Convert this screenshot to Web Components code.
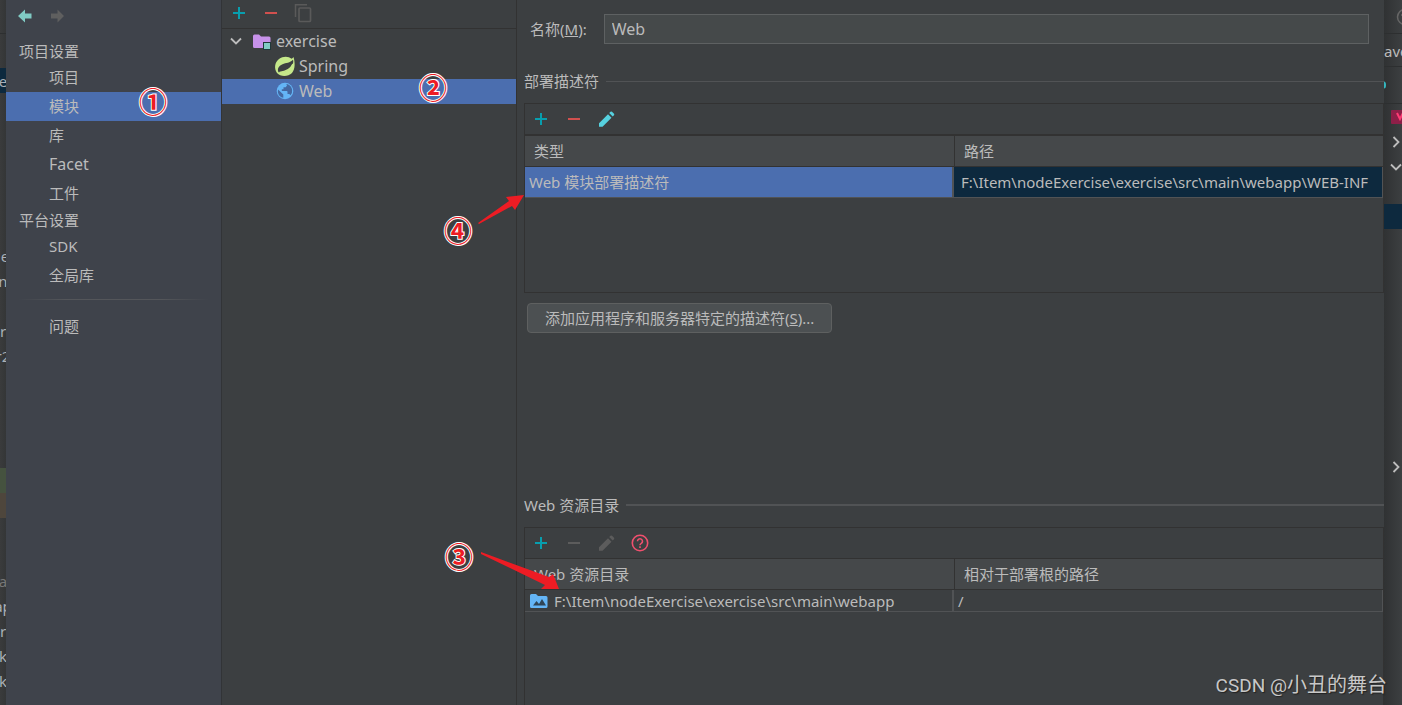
<!DOCTYPE html>
<html lang="zh-CN">
<head>
<meta charset="utf-8">
<title>项目结构</title>
<style>
  html, body { margin: 0; height: 100%; }
  body {
    background: #3c3f41; color: #bbbbbb; overflow: hidden;
    font: 15px/20px "Noto Sans", "Noto Sans CJK SC", sans-serif;
  }
</style>
</head>
<body>
<project-structure></project-structure>

<script>
const define = (name, html, setup) => {
  const template = document.createElement('template');
  template.innerHTML = html;
  customElements.define(name, class extends HTMLElement {
    constructor() {
      super();
      this.attachShadow({ mode: 'open' }).append(template.content.cloneNode(true));
    }
    connectedCallback() { if (setup) setup(this, this.shadowRoot); }
  });
};

const icons = {
  back: '<path d="M1 9 8 2.500V6.500H14.500V11.500H8V15.500Z" fill="#80cbc4"/>',
  forward: '<path d="M16 9 9.500 2.500V6.500H3V11.500H9.500V15.500Z" fill="#5f5f5f"/>',
  plus: '<path d="M9 3v12M3 9h12" stroke="#089eae" stroke-width="2"/>',
  minus: '<path d="M3 9h12" stroke="#d1504e" stroke-width="2"/>',
  minusOff: '<path d="M3 9h12" stroke="#5c5c5c" stroke-width="2"/>',
  copy: '<path d="M1.500 13V.700H13" fill="none" stroke="#5a5a5a" stroke-width="1.500"/><rect x="5" y="4" width="11.500" height="13.500" rx="1" fill="none" stroke="#5a5a5a" stroke-width="1.700"/>',
  pencil: '<path d="M1 13.200 10 4.200l3.500 3.500-9 9H1zM11.200 3l1.300-1.300q.8-.6 1.500 0l2 2q.6.7 0 1.500L14.700 6.500z" fill="#56d1df"/>',
  pencilOff: '<path d="M1 13.200 10 4.200l3.500 3.500-9 9H1zM11.200 3l1.300-1.300q.8-.6 1.500 0l2 2q.6.7 0 1.500L14.700 6.500z" fill="#5c5c5c"/>',
  help: '<circle cx="9" cy="9" r="7.700" fill="none" stroke="#f0506e" stroke-width="1.600"/><path d="M6.500 7.300a2.500 2.500 0 1 1 3.800 2.100Q9 10.200 9 11.200M9 12.300v1.700" fill="none" stroke="#f0506e" stroke-width="1.600"/>',
  down: '<path d="m4 6.500 5 5 5-5" fill="none" stroke="#bdbdbd" stroke-width="1.800"/>',
  right: '<path d="m6.500 4 5 5-5 5" fill="none" stroke="#bdbdbd" stroke-width="1.800"/>',
  module: '<path d="M0 4Q0 2.500 1.500 2.500H6L8 4.500H16Q17.500 4.500 17.500 6V14.500Q17.500 16 16 16H1.500Q0 16 0 14.500Z" fill="#c792ea"/><rect x="10.500" y="10.500" width="7" height="7" fill="#80cbc4" stroke="#20383a"/>',
  spring: '<path d="M17.500 0C19 5 19.500 12 16 16 12 20 4.500 20 1 16-2 11.500-1.500 5.500 3 2 7-1.200 12.500-1 15.600 1.700 16.500 1.300 17 .8 17.500 0Z" fill="#c5e88a"/><path d="M17 2.800C14 6 10 5.800 6.500 7.300 2.500 9 1 12 2.500 15.200 8.500 15.600 13.500 13 16.500 7.500 17.500 5.700 17.400 4 17 2.800Z" fill="#3c3f41"/><path d="M3.500 15.600C9 14.800 14.500 13 17 7" fill="none" stroke="#c5e88a" stroke-width="1.500"/>',
  web: '<circle cx="9" cy="9" r="8.300" fill="#64b5f6"/><path d="M2 7.500 7.300 12.500V15.800Q3 15 1.900 10.500ZM10.300 2 11 3.500 9.700 5.300H7.500V7.300H5.800V9H10.800Q11.500 9 11.500 10V12H13.300L14.500 13.300Q16.500 11 16.100 7.800 15.500 3.700 11.800 2.200Z" fill="#4468a2"/>',
  webFolder: '<path d="M0 3.500Q0 2 1.500 2H6L8 4H16Q17.500 4 17.500 5.500V14.500Q17.500 16 16 16H1.500Q0 16 0 14.500Z" fill="#64b5f6"/><path d="m3 13.500 3.500-4.500 2.500 3 3-5 4 6.500Z" fill="#2f4557"/>',
  vue: '<rect x="0" y="2" width="18" height="14" rx="1" fill="#8e1f48"/><path d="m6 5 3 6 3-6" fill="none" stroke="#ff3b74" stroke-width="2"/>',
  face: '<circle cx="9" cy="9" r="7.500" fill="none" stroke="#666" stroke-width="1.500"/><path d="M5 7h2" stroke="#666" stroke-width="1.500"/>',
  dot: '<path d="M0 5.500q2 0 2 3.500t-2 3.500z" fill="#35b6bf"/>'
};

define('ui-icon', `<style>
  :host { display: block; flex: none; width: 18px; height: 18px; }
  svg { display: block; overflow: visible; }
</style><svg width="18" height="18" viewBox="0 0 18 18" aria-hidden="true"></svg>`,
(host, root) => { root.querySelector('svg').innerHTML = icons[host.getAttribute('name')] || ''; });

define('icon-button', `<style>
  :host { display: block; flex: none; }
  button { display: block; border: 0; padding: 0; background: none; }
</style><button type="button"></button>`,
(host, root) => {
  const button = root.querySelector('button');
  button.setAttribute('aria-label', host.getAttribute('label'));
  button.innerHTML = `<ui-icon name="${host.getAttribute('icon')}"></ui-icon>`;
});

define('nav-item', `<style>
  :host { display: block; }
  a { display: flex; align-items: center; box-sizing: border-box; height: 29px; padding: 0 0 2px 43px; color: inherit; text-decoration: none; }
  :host([selected]) a { background: #4b6eaf; }
</style><a href="#"><slot></slot></a>`);

define('settings-nav', `<style>
  :host { display: block; background: #3f434b; border-right: 1px solid #323437; }
  .history { display: flex; gap: 13px; padding: 7px 11px 14px; }
  h2 { margin: 0; padding-left: 13px; font: inherit; line-height: 24px; }
  .latin { font-size: 16px; }
  hr { height: 1px; margin: 9px 12px 12px; border: 0; background: linear-gradient(90deg, transparent, #54565a 25%, #54565a 75%, transparent); }
</style>
<div class="history"><icon-button icon="back" label="后退"></icon-button><icon-button icon="forward" label="前进"></icon-button></div>
<nav>
  <h2>项目设置</h2>
  <nav-item>项目</nav-item><nav-item selected>模块</nav-item><nav-item>库</nav-item><nav-item class="latin">Facet</nav-item><nav-item>工件</nav-item>
  <h2>平台设置</h2>
  <nav-item>SDK</nav-item><nav-item>全局库</nav-item>
  <hr>
  <nav-item>问题</nav-item>
</nav>`);

define('tree-row', `<style>
  :host { display: flex; align-items: center; gap: 5px; box-sizing: border-box; height: 25px; padding: 0 0 1px var(--indent, 5px); font-size: 16px; }
  :host([selected]) { background: #4b6eaf; }
</style><slot></slot>`);

define('module-tree', `<style>
  :host { display: block; border-right: 1px solid #323232; }
  .tools { display: flex; align-items: center; gap: 14px; box-sizing: border-box; height: 29px; padding: 0 8px 2px; border-bottom: 1px solid #323232; }
  .folder { margin-left: 3px; }
  .child { --indent: 54px; }
</style>
<div class="tools"><icon-button icon="plus" label="添加"></icon-button><icon-button icon="minus" label="移除"></icon-button><icon-button icon="copy" label="复制"></icon-button></div>
<tree-row><ui-icon name="down"></ui-icon><ui-icon class="folder" name="module"></ui-icon><span>exercise</span></tree-row>
<tree-row class="child"><ui-icon name="spring"></ui-icon><span>Spring</span></tree-row>
<tree-row class="child" selected><ui-icon name="web"></ui-icon><span>Web</span></tree-row>`);

define('section-title', `<style>
  :host { display: flex; align-items: center; gap: 7px; height: 24px; margin-bottom: 10px; }
  h2 { margin: 0; font: inherit; }
  i { flex: 1; height: var(--rule, 1px); background: #515355; }
</style><h2><slot></slot></h2><i></i>`);

define('table-panel', `<style>
  :host { display: block; box-sizing: border-box; border: 1px solid #323232; overflow: hidden; }
  .tools { display: flex; align-items: center; gap: 15px; height: 30px; padding-left: 7px; border-bottom: var(--line, 1px) solid #323232; }
</style><div class="tools"><slot name="tools"></slot></div><slot></slot>`);

const tableStyle = `
  :host { display: block; }
  table { width: 100%; table-layout: fixed; border-collapse: separate; border-spacing: 0; }
  th, td { box-sizing: border-box; padding: 0; text-align: left; font-weight: inherit; white-space: nowrap; overflow: hidden; }
  th { height: 31px; padding-left: 9px; background: #45484a; border-bottom: 1px solid #323232; }
  th:first-child { width: calc(50% + 1px); }
  th + th { border-left: 1px solid #323232; }
  td { border-bottom: 1px solid #515355; }
  td:first-child { padding-left: 4px; border-right: 2px solid #515355; }
  td:last-child { border-right: 1px solid #515355; }`;

define('descriptor-table', `<style>${tableStyle}
  td { height: 31px; }
  td:first-child { background: #4b6eaf; }
  td:last-child { padding-left: 7px; background: #0d293e; }
</style>
<table>
  <thead><tr><th>类型</th><th>路径</th></tr></thead>
  <tbody><tr><td>Web 模块部署描述符</td><td>F:\\Item\\nodeExercise\\exercise\\src\\main\\webapp\\WEB-INF</td></tr></tbody>
</table>`);

define('resource-table', `<style>${tableStyle}
  td { height: 22px; }
  td:last-child { padding-left: 4px; }
  div { display: flex; align-items: center; gap: 6px; padding-left: 1px; }
</style>
<table>
  <thead><tr><th>Web 资源目录</th><th>相对于部署根的路径</th></tr></thead>
  <tbody><tr><td><div><ui-icon name="webFolder"></ui-icon>F:\\Item\\nodeExercise\\exercise\\src\\main\\webapp</div></td><td>/</td></tr></tbody>
</table>`);

define('facet-editor', `<style>
  :host { display: flex; flex-direction: column; min-width: 0; padding-left: 7px; }
  .name { display: flex; align-items: center; gap: 17px; padding: 14px 15px 25px 6px; }
  input { flex: 1; min-width: 0; box-sizing: border-box; height: 30px; padding: 0 7px; border: 1px solid #5e6162; outline: 0; background: #45494a; color: inherit; font: inherit; font-size: 16px; }
  .descriptors { --line: 2px; height: 190px; }
  .add { align-self: flex-start; box-sizing: border-box; height: 30px; margin: 10px 3px 160px; padding: 0 17px; border: 1px solid #5e6060; border-radius: 4px; background: #4c5052; color: inherit; font: inherit; white-space: nowrap; }
  .resources-title { --rule: 2px; }
  .resources { flex: 1; border-bottom: 0; }
</style>
<div class="name"><label for="name">名称(<u>M</u>):</label><input id="name" value="Web"></div>
<section-title>部署描述符</section-title>
<table-panel class="descriptors">
  <icon-button slot="tools" icon="plus" label="添加"></icon-button><icon-button slot="tools" icon="minus" label="移除"></icon-button><icon-button slot="tools" icon="pencil" label="编辑"></icon-button>
  <descriptor-table></descriptor-table>
</table-panel>
<button class="add" type="button">添加应用程序和服务器特定的描述符(<u>S</u>)...</button>
<section-title class="resources-title">Web 资源目录</section-title>
<table-panel class="resources">
  <icon-button slot="tools" icon="plus" label="添加"></icon-button><icon-button slot="tools" icon="minusOff" label="移除"></icon-button><icon-button slot="tools" icon="pencilOff" label="编辑"></icon-button><icon-button slot="tools" icon="help" label="帮助"></icon-button>
  <resource-table></resource-table>
</table-panel>`);

const stripStyle = `
  :host { display: block; overflow: hidden; min-width: 0; }
  div { display: flex; align-items: center; height: 25px; overflow: hidden; }
  .bar { height: 33px; border-bottom: 1px solid #2d2f30; }
  .sel { background: #0d293e; }`;

define('editor-edge', `<style>${stripStyle}
  :host { background: linear-gradient(90deg, #3a3b3c, #343637); color: #a9b0b6; }
  div { justify-content: center; }
  .gap2 { height: 34px; } .gap6 { height: 150px; } .gap1 { height: 25px; } .gap4 { height: 100px; } .gap3 { height: 50px; }
  .add { background: #45523f; } .mod { background: #4e463c; } .dim { color: #777; }
</style>
<div class="bar"></div><div class="gap2"></div><div class="sel">e</div><div class="gap6"></div>
<div>le</div><div>n</div><div class="gap1"></div><div>r</div><div>r2</div><div class="gap4"></div>
<div class="add"></div><div class="mod"></div><div class="gap3"></div><div class="dim">a</div><div>ap</div><div>r</div><div>k</div><div>k</div>`);

define('maven-edge', `<style>${stripStyle}
  :host { background: linear-gradient(90deg, #303233, #3c3f41); }
  .bar { padding-left: 12px; }
  .title { height: 33px; padding-top: 2px; box-sizing: border-box; border-bottom: 1px solid #2d2f30; }
  .actions { height: 36px; border-bottom: 1px solid #2d2f30; }
  .icon { padding-left: 7px; } .chevron { padding-left: 3px; }
  .gap1 { height: 25px; } .gap9 { height: 225px; }
</style>
<div class="bar"><ui-icon name="face"></ui-icon></div><div class="title">ave</div><div class="actions"><ui-icon name="dot"></ui-icon></div>
<div class="icon"><ui-icon name="vue"></ui-icon></div><div class="chevron"><ui-icon name="right"></ui-icon></div><div class="chevron"><ui-icon name="down"></ui-icon></div>
<div class="gap1"></div><div class="sel"></div><div class="gap9"></div><div class="chevron"><ui-icon name="right"></ui-icon></div>`);

define('step-badge', `<style>
  :host { position: absolute; width: 30px; height: 30px; text-align: center;
    font: 700 28px/30px "Noto Sans CJK SC", sans-serif; color: #ed1c24;
    -webkit-text-stroke: 2px #fff; paint-order: stroke fill; }
</style><slot></slot>`);

define('step-arrow', `<style>
  :host { position: absolute; }
  svg { display: block; overflow: visible; }
</style><svg width="80" height="40" aria-hidden="true"><path fill="#ed1c24"/></svg>`,
(host, root) => root.querySelector('path').setAttribute('d', host.getAttribute('path')));

define('project-structure', `<style>
  :host { position: relative; display: grid; grid-template-columns: 6px 216px 295px minmax(0, 1fr) 18px; min-height: 100vh; overflow: hidden; }
  .one { left: 138px; top: 86px; } .two { left: 418px; top: 72px; }
  .three { left: 444px; top: 541px; } .four { left: 443px; top: 215px; }
  .to-row { left: 478px; top: 195px; } .to-path { left: 481px; top: 552px; }
  .mark { position: absolute; right: 15px; bottom: 7px; font: 20px/24px Roboto, "Noto Sans CJK SC", sans-serif; color: #c8c8c8; text-shadow: 1px 1px 1px #222; }
  .mark span { font-size: 19px; }
</style>
<editor-edge></editor-edge>
<settings-nav></settings-nav>
<module-tree></module-tree>
<facet-editor></facet-editor>
<maven-edge></maven-edge>
<step-badge class="one">①</step-badge>
<step-badge class="two">②</step-badge>
<step-badge class="three">③</step-badge>
<step-badge class="four">④</step-badge>
<step-arrow class="to-row" path="M0 28 31 6 28 2 46 0 37 15 34 11 1 29Z"></step-arrow>
<step-arrow class="to-path" path="M0 0 68 25 72 22 78 37 60 37 64 33 0 2Z"></step-arrow>
<div class="mark"><span>CSDN @</span>小丑的舞台</div>`);
</script>
</body>
</html>
